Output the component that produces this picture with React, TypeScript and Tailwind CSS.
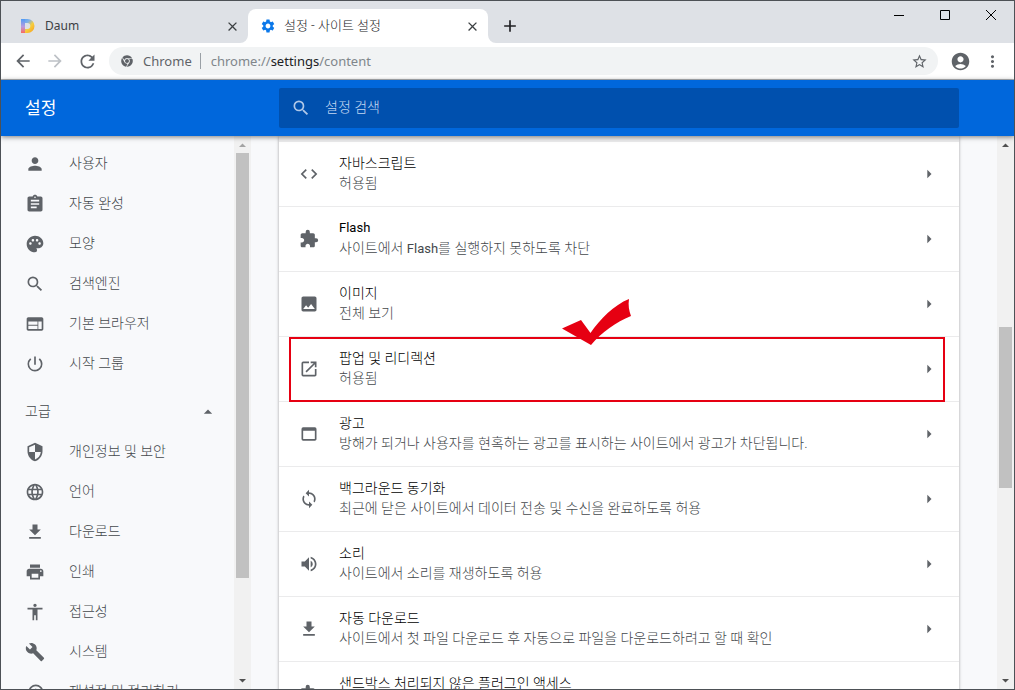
import type { ReactNode } from "react";
import type { IconType } from "react-icons";
import { FaChrome } from "react-icons/fa";
import {
  MdAccessibility,
  MdAccountCircle,
  MdAdd,
  MdArrowBack,
  MdArrowDropUp,
  MdArrowForward,
  MdArrowRight,
  MdAssignment,
  MdBuild,
  MdClose,
  MdCode,
  MdExtension,
  MdFileDownload,
  MdImage,
  MdLanguage,
  MdMoreVert,
  MdOpenInNew,
  MdPalette,
  MdPerson,
  MdPowerSettingsNew,
  MdPrint,
  MdRefresh,
  MdRestore,
  MdSearch,
  MdSecurity,
  MdSettings,
  MdStarBorder,
  MdSync,
  MdVolumeUp,
  MdWeb,
  MdWebAsset,
} from "react-icons/md";

type MenuItem = { icon: IconType; label: string };

const basicMenu: MenuItem[] = [
  { icon: MdPerson, label: "사용자" },
  { icon: MdAssignment, label: "자동 완성" },
  { icon: MdPalette, label: "모양" },
  { icon: MdSearch, label: "검색엔진" },
  { icon: MdWeb, label: "기본 브라우저" },
  { icon: MdPowerSettingsNew, label: "시작 그룹" },
];

const advancedMenu: MenuItem[] = [
  { icon: MdSecurity, label: "개인정보 및 보안" },
  { icon: MdLanguage, label: "언어" },
  { icon: MdFileDownload, label: "다운로드" },
  { icon: MdPrint, label: "인쇄" },
  { icon: MdAccessibility, label: "접근성" },
  { icon: MdBuild, label: "시스템" },
  { icon: MdRestore, label: "재설정 및 정리하기" },
];

type Setting = { icon: IconType; title: ReactNode; detail: ReactNode; marked?: boolean };

const flash = <span className="text-[13px] font-normal">Flash</span>;

const siteSettings: Setting[] = [
  { icon: MdCode, title: "자바스크립트", detail: "허용됨" },
  { icon: MdExtension, title: flash, detail: <>사이트에서 {flash}를 실행하지 못하도록 차단</> },
  { icon: MdImage, title: "이미지", detail: "전체 보기" },
  { icon: MdOpenInNew, title: "팝업 및 리디렉션", detail: "허용됨", marked: true },
  { icon: MdWebAsset, title: "광고", detail: "방해가 되거나 사용자를 현혹하는 광고를 표시하는 사이트에서 광고가 차단됩니다." },
  { icon: MdSync, title: "백그라운드 동기화", detail: "최근에 닫은 사이트에서 데이터 전송 및 수신을 완료하도록 허용" },
  { icon: MdVolumeUp, title: "소리", detail: "사이트에서 소리를 재생하도록 허용" },
  { icon: MdFileDownload, title: "자동 다운로드", detail: "사이트에서 첫 파일 다운로드 후 자동으로 파일을 다운로드하려고 할 때 확인" },
  { icon: MdExtension, title: "샌드박스 처리되지 않은 플러그인 액세스", detail: "사이트에서 플러그인을 사용하여 컴퓨터에 액세스하려고 할 때 확인" },
];

function DaumLogo() {
  return (
    <svg width="14" height="14" viewBox="0 0 14 14" aria-hidden="true">
      <defs>
        <linearGradient id="daum" x1="0" y1="0" x2="1" y2="1">
          <stop offset="0" stopColor="#4f9cf5" />
          <stop offset="0.35" stopColor="#7fb0e8" />
          <stop offset="0.6" stopColor="#f7cf3c" />
          <stop offset="1" stopColor="#f79a1e" />
        </linearGradient>
        <linearGradient id="daumLeft" x1="0" y1="0" x2="0" y2="1">
          <stop offset="0" stopColor="#4f9cf5" />
          <stop offset="0.55" stopColor="#b99be0" />
          <stop offset="1" stopColor="#fb6a5c" />
        </linearGradient>
      </defs>
      <path d="M0 0h6.500a7 7 0 0 1 0 14H0V0Zm4 4v6h2.300a3 3 0 0 0 0-6H4Z" fill="url(#daum)" fillRule="evenodd" />
      <path d="M0 0h4v14H0z" fill="url(#daumLeft)" />
    </svg>
  );
}

function TabStrip() {
  return (
    <header className="flex h-[42px] shrink-0 bg-[#dee1e6] text-[13px] text-[#3c4043]">
      <div className="flex w-[247px] items-center gap-2.5 pt-2 pr-2 pl-5">
        <DaumLogo />
        <span className="flex-1 font-['Noto_Sans',sans-serif] text-xs font-normal">Daum</span>
        <button aria-label="Daum 탭 닫기" className="text-[#3c4043]">
          <MdClose size={15} />
        </button>
      </div>
      <div className="relative mt-2 flex w-60 items-center gap-2 rounded-t-lg bg-white pr-2 pl-3">
        <svg className="absolute bottom-0 -left-2" width="8" height="8" aria-hidden="true">
          <path d="M8 0v8H0a8 8 0 0 0 8-8Z" fill="#fff" />
        </svg>
        <svg className="absolute -right-2 bottom-0" width="8" height="8" aria-hidden="true">
          <path d="M0 0v8h8a8 8 0 0 1-8-8Z" fill="#fff" />
        </svg>
        <MdSettings size={16} className="text-[#0b78ea]" />
        <span className="flex-1 text-[#202124]">설정 - 사이트 설정</span>
        <button aria-label="설정 탭 닫기" className="text-[#3c4043]">
          <MdClose size={15} />
        </button>
      </div>
      <button aria-label="새 탭" className="mt-2 ml-3 flex w-5 items-center text-[#202124]">
        <MdAdd size={20} />
      </button>
      <div className="ml-auto flex h-7">
        <button aria-label="최소화" className="flex w-[46px] items-center justify-center">
          <svg width="12" height="12" viewBox="0 0 12 12"><path d="M1 6.500h10" stroke="#000" /></svg>
        </button>
        <button aria-label="최대화" className="flex w-[46px] items-center justify-center">
          <svg width="12" height="12" viewBox="0 0 12 12"><path d="M1.500 1.500h9v9h-9z" fill="none" stroke="#000" /></svg>
        </button>
        <button aria-label="닫기" className="flex w-[46px] items-center justify-center">
          <svg width="12" height="12" viewBox="0 0 12 12"><path d="m1 1 10 10m0-10-10 10" stroke="#000" /></svg>
        </button>
      </div>
    </header>
  );
}

function Toolbar() {
  return (
    <div className="flex h-[37px] shrink-0 items-center border-b border-[#b4b6b9] bg-white px-3 font-normal text-[#5f6368]">
      <div className="flex w-24 items-center gap-3">
        <button aria-label="뒤로"><MdArrowBack size={20} /></button>
        <button aria-label="앞으로" className="text-[#bdc1c6]"><MdArrowForward size={20} /></button>
        <button aria-label="새로고침"><MdRefresh size={21} /></button>
      </div>
      <div className="flex h-7 flex-1 items-center rounded-full bg-[#f1f3f4] pr-2.5 pl-3 font-['Noto_Sans',sans-serif] text-[13px]">
        <FaChrome size={12} />
        <span className="ml-2.5">Chrome</span>
        <span className="mr-2.5 ml-2 h-4 w-px bg-[#9aa0a6]" />
        <span className="flex-1 text-[#80868b]">
          chrome://<span className="text-[#202124]">settings</span>/content
        </span>
        <button aria-label="북마크에 추가"><MdStarBorder size={17} /></button>
      </div>
      <button aria-label="프로필" className="ml-3"><MdAccountCircle size={21} /></button>
      <button aria-label="메뉴" className="ml-3"><MdMoreVert size={19} /></button>
    </div>
  );
}

function ScrollBar({ thumb, upClass }: { thumb: string; upClass: string }) {
  return (
    <div className="flex shrink-0 flex-col items-center bg-[#f1f1f1] px-0.5 pt-[6px] pb-1" aria-hidden="true">
      <svg width="7" height="7" viewBox="0 0 7 7" className={upClass}><path d="M0 5 3.500 1.500 7 5z" fill="currentColor" /></svg>
      <div className="mt-1 flex w-[13px] flex-1 flex-col">
        <div className={thumb} />
      </div>
      <svg width="7" height="7" viewBox="0 0 7 7" className="text-[#505050]"><path d="M0 1h7L3.500 4.500z" fill="currentColor" /></svg>
    </div>
  );
}

function MenuLink({ icon: Icon, label }: MenuItem) {
  return (
    <li>
      <a href="#" className="flex h-10 items-center gap-6 pl-6">
        <Icon size={20} className="shrink-0 text-[#5f6368]" />
        <span className="pb-0.5">{label}</span>
      </a>
    </li>
  );
}

function Sidebar() {
  return (
    <nav className="min-w-0 flex-1 overflow-hidden pt-2 text-[#44484c]">
      <ul>{basicMenu.map((item) => <MenuLink key={item.label} {...item} />)}</ul>
      <button className="mt-2 flex h-10 w-full items-center justify-between pr-4 pl-6">
        <span className="pb-0.5">고급</span>
        <MdArrowDropUp size={20} className="text-[#5f6368]" />
      </button>
      <ul>{advancedMenu.map((item) => <MenuLink key={item.label} {...item} />)}</ul>
    </nav>
  );
}

function Highlight() {
  return (
    <span className="pointer-events-none absolute top-0 right-[14px] -bottom-px left-[10px] border-2 border-[#e60012]">
      <svg className="absolute -top-[41px] left-[271px]" width="70" height="48" viewBox="0 0 70 48" aria-hidden="true">
        <path d="M0 30.500 19 22l9.500 13C38 21 52 7 67 1c-1 6 0 12 2 17C54 24 40 34 29 47Z" fill="#e60012" />
      </svg>
    </span>
  );
}

function SettingRow({ icon: Icon, title, detail, marked }: Setting) {
  return (
    <li className={marked ? "relative z-[1] border-t border-[#ebebec]" : "border-t border-[#ebebec]"}>
      <button className="flex h-16 w-full items-center gap-5 px-5 text-left">
        <Icon size={20} className="shrink-0 text-[#5f6368]" />
        <span className="flex min-w-0 flex-1 flex-col pb-0.5 whitespace-nowrap">
          <span className="leading-5 text-black">{title}</span>
          <span className="leading-5 text-[#44484c]">{detail}</span>
        </span>
        <MdArrowRight size={20} className="shrink-0 text-[#5f6368]" />
      </button>
      {marked && <Highlight />}
    </li>
  );
}

export default function App() {
  return (
    <div className="flex h-screen flex-col overflow-hidden border border-[#4d5156] bg-[#f8f9fb] font-[Roboto,'Noto_Sans_CJK_KR',sans-serif] text-sm font-light">
      <TabStrip />
      <Toolbar />
      <div className="z-10 flex h-14 shrink-0 items-center bg-[#0067dc] pr-[55px] shadow-[0_1px_5px_rgba(0,0,0,0.5)]">
        <h1 className="w-[278px] pl-6 text-[17px] font-normal text-white">설정</h1>
        <label className="flex h-10 flex-1 items-center gap-3.5 rounded-xs bg-[#0050ae] pl-3 text-[#b0c8e8]">
          <MdSearch size={20} />
          <input
            type="search"
            aria-label="설정 검색"
            placeholder="설정 검색"
            className="min-w-0 flex-1 bg-transparent pb-0.5 outline-none placeholder:text-[#c4d8f2]"
          />
        </label>
      </div>
      <div className="flex min-h-0 flex-1">
        <div className="flex w-[250px] shrink-0">
          <Sidebar />
          <ScrollBar thumb="h-[425px] bg-[#c1c1c1]" upClass="text-[#a3a3a3]" />
        </div>
        <main className="min-w-0 flex-1 overflow-hidden pr-[38px] pl-7">
          <ul className="border-t-[5px] border-[#ededee] bg-white shadow-[0_0_3px_rgba(0,0,0,0.35)]">
            {siteSettings.map((setting, i) => <SettingRow key={i} {...setting} />)}
          </ul>
        </main>
        <ScrollBar thumb="mt-[174px] h-[161px] bg-[#c1c1c1]" upClass="text-[#505050]" />
      </div>
    </div>
  );
}
